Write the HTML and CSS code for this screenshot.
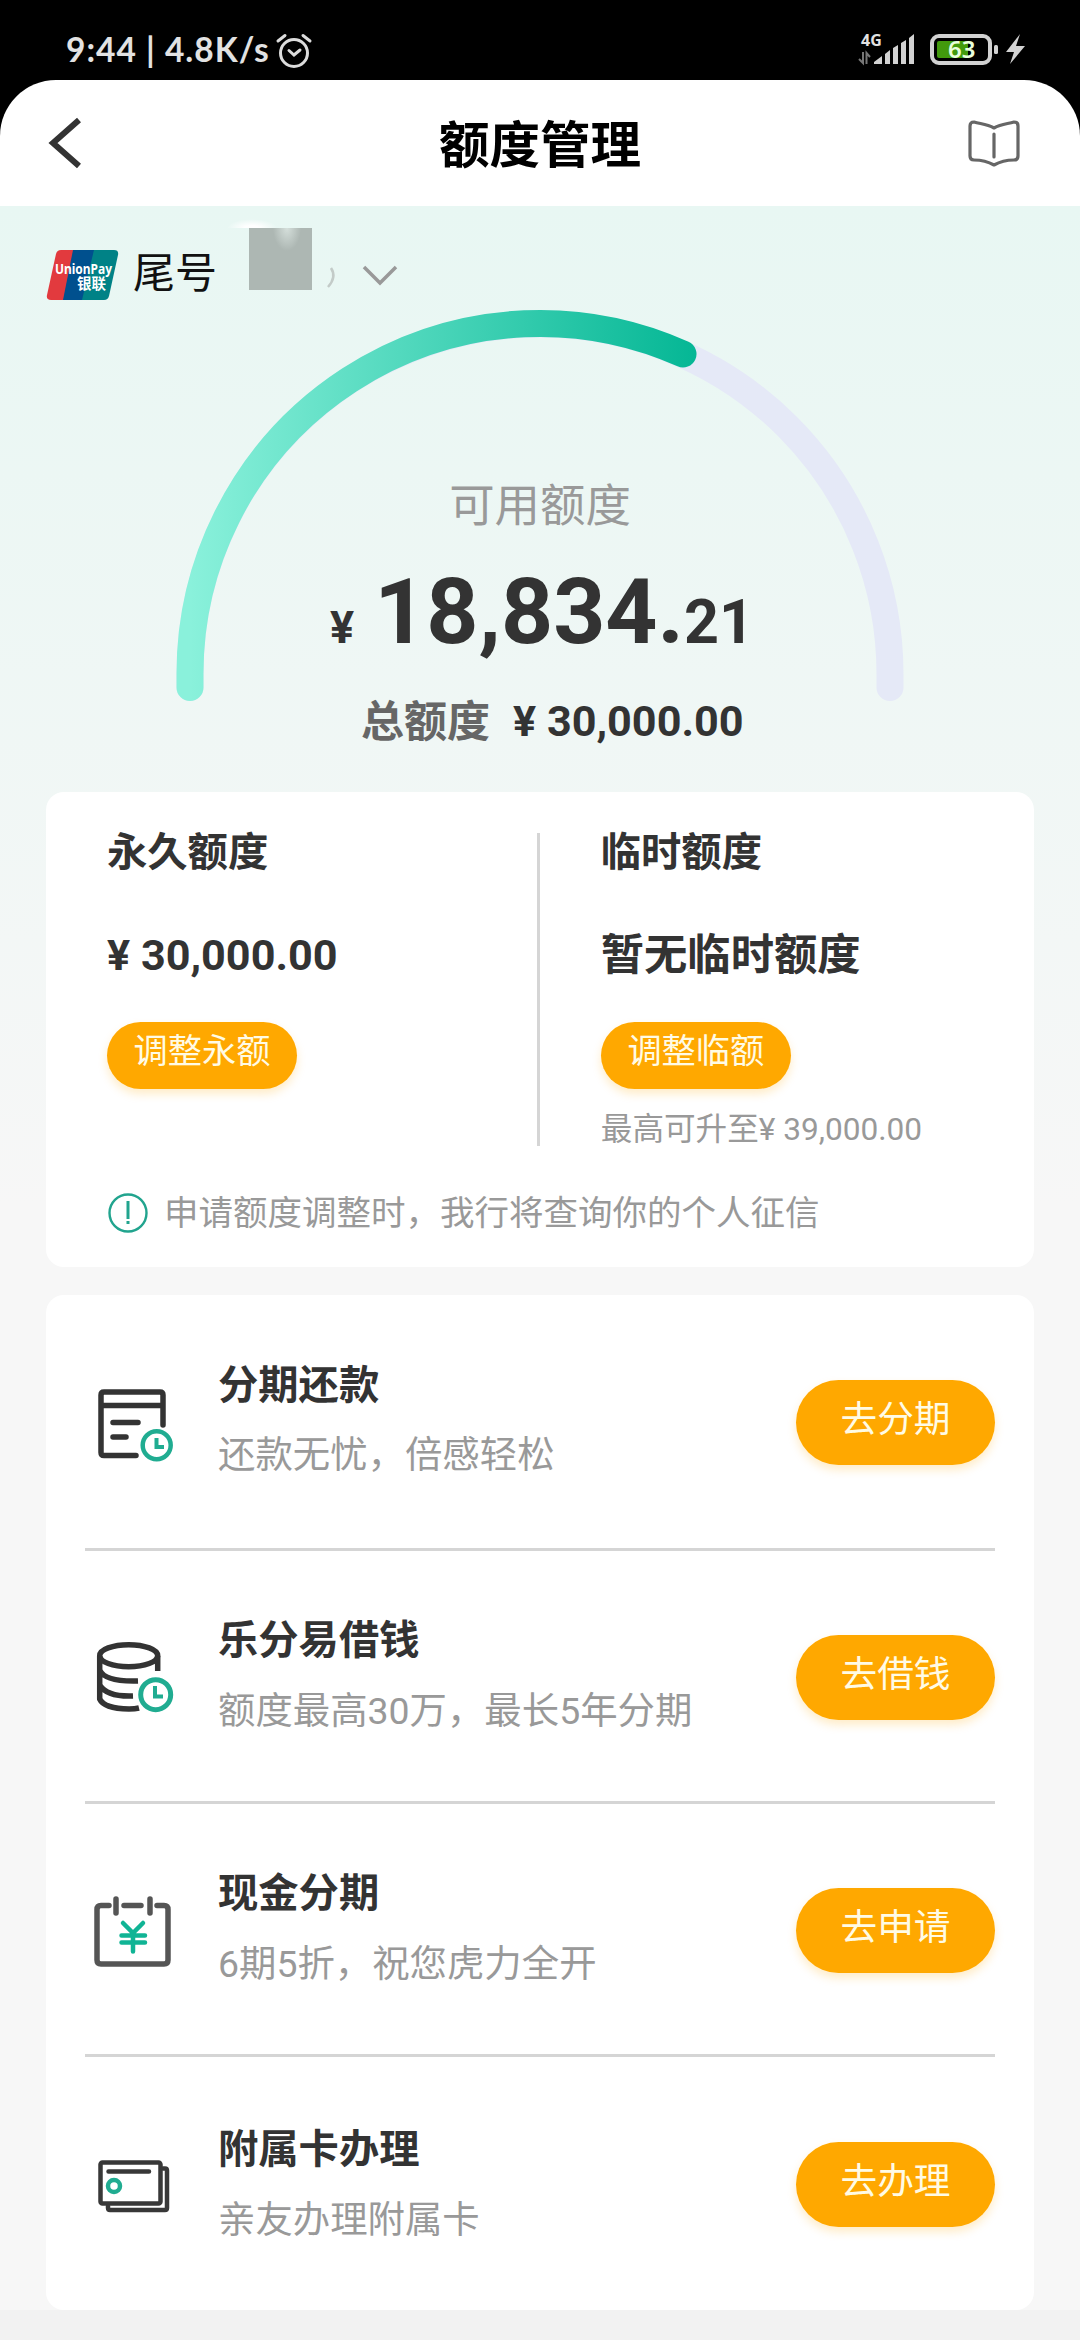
FILE: index.html
```html
<!DOCTYPE html>
<html lang="zh-CN">
<head>
<meta charset="utf-8">
<title>额度管理</title>
<link rel="stylesheet" href="styles.css">
</head>
<body>
<div class="status">
  <span class="clock">9:44 | 4.8K/s</span>
  <svg class="alarm" width="36" height="36" viewBox="0 0 36 36" fill="none" stroke="#dcdcdc" stroke-width="3" stroke-linecap="round"><circle cx="18" cy="20" r="13.5"/><path d="M2 8L9 2.500M27 2.500L34 8M13 17.500L18 22L24 17"/></svg>
  <span class="spacer"></span>
  <svg class="system" width="170" height="36" viewBox="0 0 170 36">
    <text class="net" x="3" y="13">4G</text>
    <path d="M5 19V30L1 26M8.500 31V20L12 24" fill="none" stroke="#777" stroke-width="2"/>
    <path d="M16 31V29L24 23V31ZM27 31V21L32 17V31ZM35 31V15L40 12V31ZM43 31V10L48 7V31ZM51 31V5L56 1V31Z" fill="#d2d2d2"/>
    <rect x="74" y="3" width="58" height="27" rx="7" fill="none" stroke="#d2d2d2" stroke-width="4"/>
    <path d="M81 8H110V25H81Q79 25 79 23V10Q79 8 81 8Z" fill="#429a0d"/>
    <rect x="136" y="12" width="4" height="9" rx="1.500" fill="#d2d2d2"/>
    <text class="charge" x="90" y="25">63</text>
    <path d="M162 1L148 19H156L152 31L167 13H158Z" fill="#d2d2d2"/>
  </svg>
</div>
<header class="nav">
  <svg width="36" height="52" viewBox="0 0 36 52" fill="none" stroke="#333" stroke-width="6"><path d="M32 3L6 26L32 49"/></svg>
  <h1>额度管理</h1>
  <svg width="52" height="48" viewBox="0 0 52 48" fill="none" stroke="#666" stroke-width="3.200" stroke-linejoin="round" stroke-linecap="round"><path d="M26 9C19 5 13 5 6 3Q2 3 2 7V37Q2 41 6 41C14 41 19 42 26 46C33 42 38 41 46 41Q50 41 50 37V7Q50 3 46 3C39 5 33 5 26 9ZM26 15V38"/></svg>
</header>
<main class="page">
  <section class="summary">
    <div class="card-picker">
      <svg class="unionpay" width="74" height="52" viewBox="0 0 74 52">
        <path d="M15 1H31L20 51H5Q0 51 1 46L10 5Q11 1 15 1Z" fill="#e23a3e"/>
        <path d="M27 1H53L42 51H17Z" fill="#00508e"/>
        <path d="M48 1H68Q73 1 72 6L63 47Q62 51 58 51H36Z" fill="#008286"/>
        <text class="up-en" x="9" y="25" textLength="57" lengthAdjust="spacingAndGlyphs">UnionPay</text>
        <text class="up-cn" x="31" y="40">银联</text>
      </svg>
      <span class="tail">尾号</span>
      <span class="mask"></span>
      <svg class="paren" width="10" height="22" viewBox="0 0 10 22" fill="none" stroke="#c3cbc8" stroke-width="2.500"><path d="M5 1Q11 10 2 20"/></svg>
      <svg class="chev" width="36" height="22" viewBox="0 0 36 22" fill="none" stroke="#999" stroke-width="3.500"><path d="M2 2L18 18L34 2"/></svg>
    </div>
    <div class="gauge">
      <svg class="arc" width="730" height="394" viewBox="0 0 730 394" fill="none" stroke-width="27" stroke-linecap="round">
        <defs><linearGradient id="prog" gradientUnits="userSpaceOnUse" x1="15" y1="0" x2="520" y2="0"><stop offset="0" stop-color="#8af1db"/><stop offset="1" stop-color="#05b795"/></linearGradient></defs>
        <path d="M15 379.500V366A350 350 0 0 1 715 366V379.500" stroke="#e5e9f7"/>
        <path d="M15 379.500V366A350 350 0 0 1 508 46" stroke="url(#prog)"/>
      </svg>
      <div class="readout">
        <p class="caption">可用额度</p>
        <p class="amount"><small class="yen">¥</small><b>18,834.</b><small class="cents">21</small></p>
        <p class="total"><span>总额度</span><b class="money">¥ 30,000.00</b></p>
      </div>
    </div>
  </section>

  <section class="card limits">
    <div class="limit-cols">
      <div class="limit">
        <h2>永久额度</h2>
        <p class="value money">¥ 30,000.00</p>
        <button class="pill small-pill">调整永额</button>
      </div>
      <div class="limit second">
        <h2>临时额度</h2>
        <p class="value">暂无临时额度</p>
        <button class="pill small-pill">调整临额</button>
        <p class="hint">最高可升至¥ 39,000.00</p>
      </div>
    </div>
    <p class="notice">
      <svg width="42" height="42" viewBox="0 0 42 42" fill="none" stroke="#21a48e" stroke-width="2.400"><circle cx="21" cy="21" r="18.500"/><path d="M21 9V27M21 29V32" stroke-width="3"/></svg>
      <span>申请额度调整时，我行将查询你的个人征信</span>
    </p>
  </section>

  <section class="card services">
    <article class="service">
      <svg class="icon" width="90" height="90" viewBox="0 0 90 90" fill="none" stroke="#333" stroke-width="5.500" stroke-linecap="round"><path d="M41 71.500H9Q6 71.500 6 68.500V11Q6 8 9 8H65Q68 8 68 11V41M6 21.500H68M18 38.500H43M18 53H31"/><g stroke="#20ac91" stroke-width="4.500"><circle cx="61.700" cy="61.300" r="14"/><path d="M61.500 54V63H69" stroke-linecap="butt" stroke-width="4"/></g></svg>
      <div class="copy"><h3>分期还款</h3><p>还款无忧，倍感轻松</p></div>
      <button class="pill">去分期</button>
    </article>
    <article class="service">
      <svg class="icon" width="90" height="90" viewBox="0 0 90 90" fill="none" stroke="#333" stroke-width="5.500"><ellipse cx="33.700" cy="16.700" rx="29" ry="11"/><path d="M4.700 17V60Q9 69.500 34 70Q40 70 44 69M62.700 17V32M4.700 31Q10 43 43 42M4.700 46Q12 58 38 57"/><g stroke="#20ac91" stroke-width="5"><circle cx="60.700" cy="55.700" r="15"/><path d="M60 47V57.500H68" stroke-width="4"/></g></svg>
      <div class="copy"><h3>乐分易借钱</h3><p>额度最高30万，最长5年分期</p></div>
      <button class="pill">去借钱</button>
    </article>
    <article class="service">
      <svg class="icon" width="90" height="90" viewBox="0 0 90 90" fill="none" stroke="#555" stroke-width="5.500" stroke-linecap="round"><path d="M14 13.500H6Q2 13.500 2 17.500V68Q2 72 6 72H69Q73 72 73 68V17.500Q73 13.500 69 13.500H62M29 13.500H46M21 7V21M55 7V21"/><path d="M28 31L38 41L48 31M26.500 43.500H50M26.500 50.500H50M38 41V59.500" stroke="#10b495" stroke-width="4.500"/></svg>
      <div class="copy"><h3>现金分期</h3><p>6期5折，祝您虎力全开</p></div>
      <button class="pill">去申请</button>
    </article>
    <article class="service">
      <svg class="icon" width="90" height="90" viewBox="0 0 90 90" fill="none" stroke="#383838" stroke-width="4.500" stroke-linecap="round"><rect x="5.500" y="16.500" width="60" height="41" rx="2"/><path d="M13.500 25.500H54M68 22.500H70Q72 22.500 72 24.500V62Q72 64 70 64H15Q13 64 13 62V60"/><circle cx="19" cy="40" r="6" stroke="#20ac91"/></svg>
      <div class="copy"><h3>附属卡办理</h3><p>亲友办理附属卡</p></div>
      <button class="pill">去办理</button>
    </article>
  </section>
</main>
</body>
</html>
```
FILE: styles.css
```css
* { box-sizing: border-box; }
body, h1, h2, h3, p { margin: 0; }
body { width: 1080px; height: 2340px; overflow: hidden; background: #000; font-family: Roboto, "Noto Sans CJK SC", sans-serif; color: #333; }
svg { display: block; flex: none; overflow: visible; }
.status { height: 80px; display: flex; align-items: flex-start; padding: 33px 52px 0 66px; }
.clock { width: 203px; color: #e2e2e2; font: 700 33.500px/33px Lato, "Noto Sans", sans-serif; letter-spacing: 1px; white-space: nowrap; }
.alarm { margin-left: 7px; }
.spacer { flex: 1; }
.net { font: 700 16px "Noto Sans", sans-serif; fill: #e2e2e2; }
.charge { font: 600 24px "Noto Sans", sans-serif; fill: #e9ffdc; }
.nav { height: 126px; background: #fff; border-radius: 56px 56px 0 0; display: flex; align-items: center; justify-content: space-between; padding: 0 60px 0 47px; }
.nav h1 { font-size: 50.500px; font-weight: 700; color: #000; line-height: 60px; margin: 5px 0 0 29px; }
.page { height: 2134px; padding: 0 46px; background: linear-gradient(#e8f7f3 0, #f7f7f7 1000px, #f7f7f7 2104px, #f2f2f2 2104px); }
.summary { height: 586px; }
.card-picker { height: 104px; display: flex; align-items: flex-start; padding-top: 22px; }
.unionpay { margin-top: 21px; }
.up-en { font: 700 15px "Noto Sans", sans-serif; fill: #fff; }
.up-cn { font: 700 14.500px "Noto Sans CJK SC", sans-serif; fill: #fff; }
.tail { font-size: 42px; line-height: 60px; color: #111; margin: 16px 0 0 13px; }
.mask { position: relative; width: 63px; height: 62px; margin-left: 32px; background: radial-gradient(ellipse at 38px 0, #d5dfdb 0, #adb7b3 14px); }
.mask::before { content: ""; position: absolute; left: -22px; top: -9px; width: 50px; height: 9px; background: radial-gradient(ellipse at 50% 100%, #fff 20%, #ffffff00 70%); }
.paren { margin: 39px 0 0 14px; }
.chev { margin: 37px 0 0 26px; }
.gauge { position: relative; width: 730px; height: 394px; margin-left: 129px; }
.gauge .arc { position: absolute; left: 0; top: -2px; }
.readout { position: relative; display: flex; flex-direction: column; padding-top: 167px; }
.caption { font-size: 45.400px; line-height: 60px; color: #999; text-align: center; font-weight: 400; }
.amount { display: flex; align-items: baseline; height: 110px; line-height: 110px; margin: 20px 0 0 155px; white-space: nowrap; }
.amount .yen { font-size: 45px; font-weight: 700; }
.amount b { font-size: 91px; margin-left: 20px; }
.amount .cents { font-size: 61px; font-weight: 700; }
.total { display: flex; align-items: center; line-height: 60px; font-size: 43px; margin: 25px 0 0 186px; white-space: nowrap; }
.total span { color: #666; font-weight: 700; }
.total b { font-size: 43.200px; margin-left: 23px; font-weight: 700; }
.card { background: #fff; border-radius: 18px; }
.limits { height: 475px; padding: 31px 61px 0; }
.limit-cols { display: flex; }
.limit { width: 436px; height: 323px; }
.second { padding-left: 61px; position: relative; }
.second::before { content: ""; position: absolute; left: -3px; top: 10px; width: 3px; height: 313px; background: #d5d5d5; }
.limit h2 { font-size: 40.300px; line-height: 60px; font-weight: 700; }
.value { font-size: 43.300px; line-height: 60px; margin-top: 43px; font-weight: 700; white-space: nowrap; }
.value.money { font-size: 43.200px; }
.pill { display: block; border: 0; background: #ffa800; color: #fffbe5; border-radius: 43px; box-shadow: 0 5px 10px #ffa80038; font: 400 36.700px/48px Roboto, "Noto Sans CJK SC", sans-serif; width: 199px; height: 85px; padding: 0 0 5px; }
.small-pill { width: 190px; height: 67px; margin-top: 36px; font-size: 34.200px; padding-bottom: 9px; }
.hint { font-size: 31.600px; line-height: 48px; margin-top: 17px; color: #999; white-space: nowrap; }
.notice { display: flex; align-items: center; margin-top: 44px; font-size: 34.500px; line-height: 46px; color: #999; white-space: nowrap; }
.notice span { margin-left: 15px; }
.services { margin-top: 28px; height: 1015px; padding: 0 39px; }
.service { height: 253px; display: flex; align-items: flex-start; padding-top: 85px; }
.service + .service { border-top: 3px solid #d5d5d5; padding-top: 84px; }
.icon { margin: 4px 0 0 10px; }
.copy { margin: -24px 0 0 33px; flex: 1; }
.copy h3 { font-size: 40.300px; line-height: 60px; font-weight: 700; }
.copy p { font-size: 37.400px; line-height: 50px; margin-top: 14px; color: #999; white-space: nowrap; }
.service + .service .copy p { margin-top: 15px; }
.service:last-child { padding-top: 85px; }
.service:last-child .copy { margin-top: -22px; }
```
